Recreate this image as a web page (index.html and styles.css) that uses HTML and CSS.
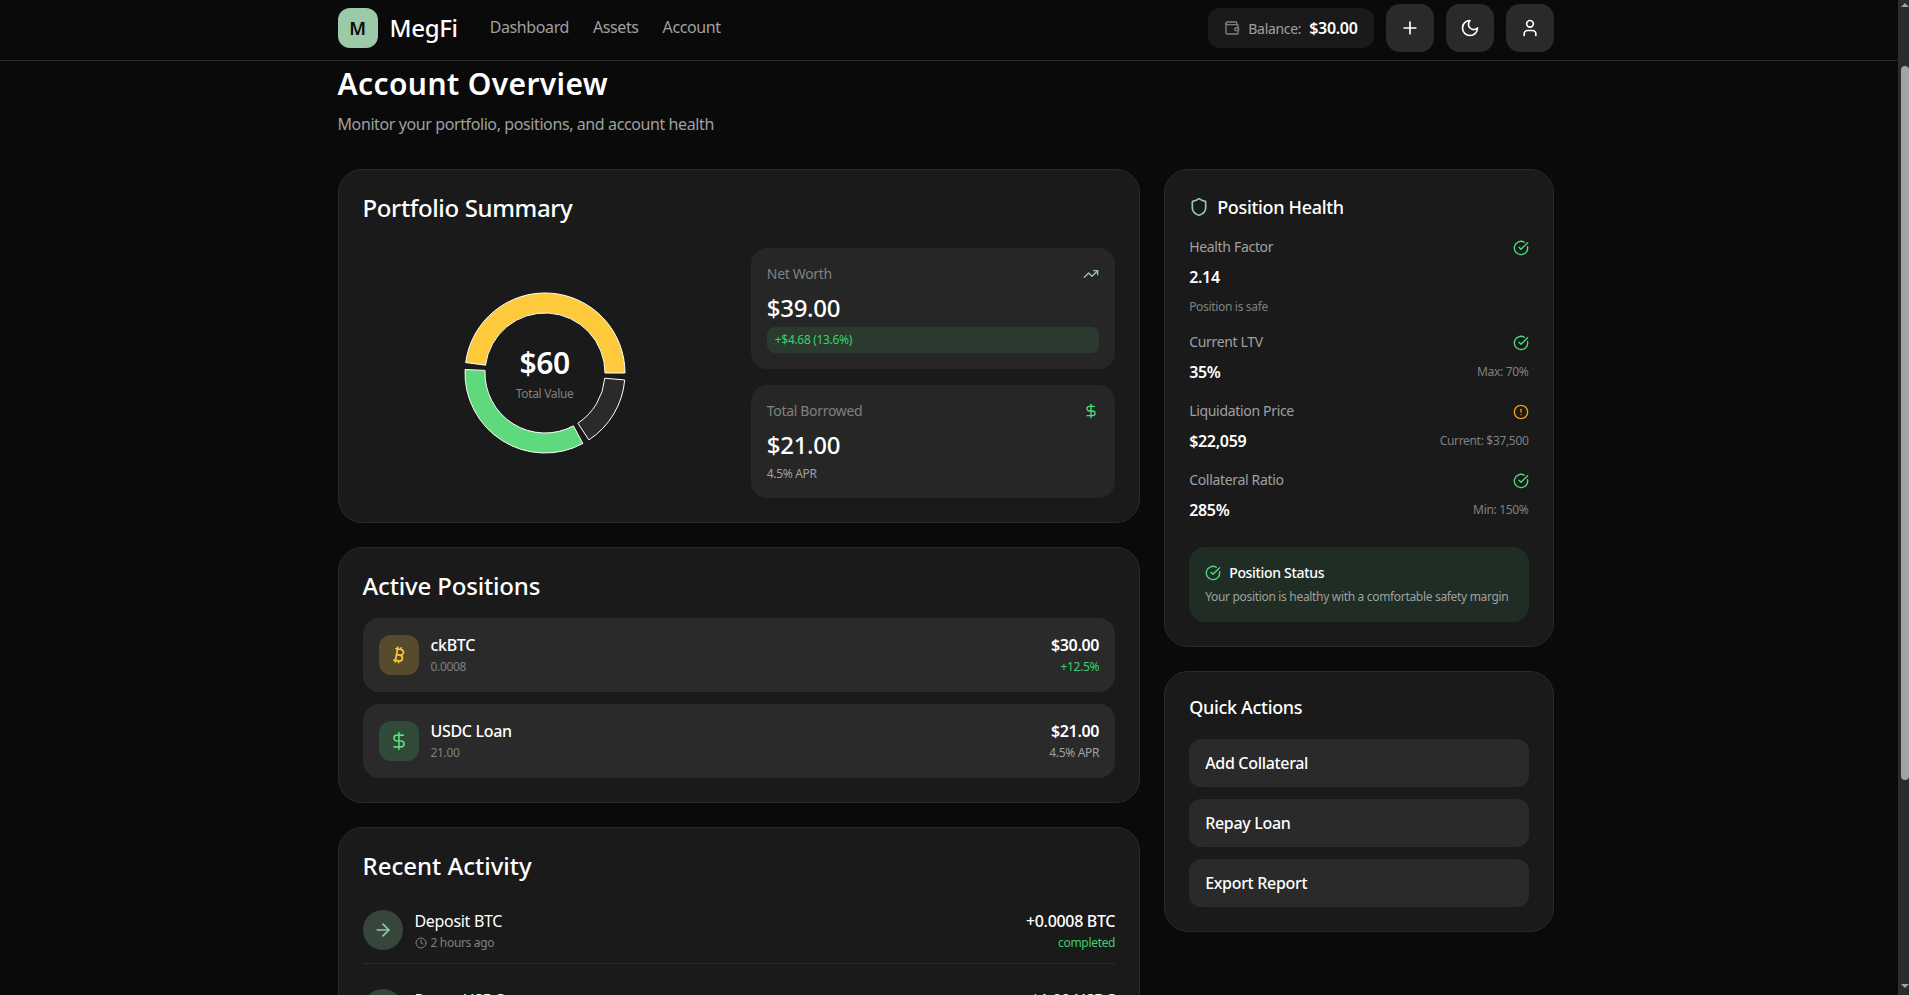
FILE: index.html
```html
<!DOCTYPE html>
<html lang="en">
<head>
    <meta charset="UTF-8">
    <meta name="viewport" content="width=device-width, initial-scale=1.0">
    <title>MegFi - Account Overview</title>
    <link rel="stylesheet" href="styles.css">
</head>
<body>
    <svg class="sprite" aria-hidden="true">
        <symbol id="i-wallet" viewBox="0 0 24 24"><path d="M19 7V4a1 1 0 0 0-1-1H5a2 2 0 0 0 0 4h15a1 1 0 0 1 1 1v4h-3a2 2 0 0 0 0 4h3a1 1 0 0 0 1-1v-2a1 1 0 0 0-1-1"/><path d="M3 5v14a2 2 0 0 0 2 2h15a1 1 0 0 0 1-1v-4"/></symbol>
        <symbol id="i-plus" viewBox="0 0 24 24"><path d="M5 12h14"/><path d="M12 5v14"/></symbol>
        <symbol id="i-moon" viewBox="0 0 24 24"><path d="M12 3a6 6 0 0 0 9 9 9 9 0 1 1-9-9Z"/></symbol>
        <symbol id="i-user" viewBox="0 0 24 24"><path d="M19 21v-2a4 4 0 0 0-4-4H9a4 4 0 0 0-4 4v2"/><circle cx="12" cy="7" r="4"/></symbol>
        <symbol id="i-trend" viewBox="0 0 24 24"><polyline points="22 7 13.5 15.5 8.5 10.5 2 17"/><polyline points="16 7 22 7 22 13"/></symbol>
        <symbol id="i-dollar" viewBox="0 0 24 24"><line x1="12" y1="2" x2="12" y2="22"/><path d="M17 5H9.5a3.5 3.5 0 0 0 0 7h5a3.5 3.5 0 0 1 0 7H6"/></symbol>
        <symbol id="i-shield" viewBox="0 0 24 24"><path d="M20 13c0 5-3.5 7.5-7.66 8.95a1 1 0 0 1-.67-.01C7.5 20.5 4 18 4 13V6a1 1 0 0 1 1-1c2 0 4.5-1.2 6.24-2.72a1.17 1.17 0 0 1 1.52 0C14.51 3.81 17 5 19 5a1 1 0 0 1 1 1z"/></symbol>
        <symbol id="i-check" viewBox="0 0 24 24"><path d="M21.801 10A10 10 0 1 1 17 3.335"/><path d="m9 11 3 3L22 4"/></symbol>
        <symbol id="i-alert" viewBox="0 0 24 24"><circle cx="12" cy="12" r="10"/><line x1="12" y1="8" x2="12" y2="12"/><line x1="12" y1="16" x2="12.01" y2="16"/></symbol>
        <symbol id="i-bitcoin" viewBox="0 0 24 24"><path d="M11.767 19.089c4.924.868 6.14-6.025 1.216-6.894m-1.216 6.894L5.86 18.047m5.908 1.042-.347 1.97m1.563-8.864c4.924.869 6.14-6.025 1.215-6.893m-1.215 6.893-3.94-.694m5.155-6.2L8.29 4.26m5.908 1.042.348-1.97M7.48 20.364l3.126-17.727"/></symbol>
        <symbol id="i-arrow" viewBox="0 0 24 24"><path d="M5 12h14"/><path d="m12 5 7 7-7 7"/></symbol>
        <symbol id="i-clock" viewBox="0 0 24 24"><circle cx="12" cy="12" r="10"/><polyline points="12 6 12 12 16 14"/></symbol>
    </svg>

    <div class="page">
        <header class="topbar">
            <div class="topbar-inner">
                <div class="brand">
                    <div class="logo">M</div>
                    <span class="brand-name">MegFi</span>
                </div>
                <nav class="nav">
                    <a href="#">Dashboard</a>
                    <a href="#">Assets</a>
                    <a href="#">Account</a>
                </nav>
                <div class="topbar-right">
                    <div class="balance">
                        <svg class="icon icon-16 muted"><use href="#i-wallet"/></svg>
                        <span class="balance-label">Balance:</span>
                        <span class="balance-value">$30.00</span>
                    </div>
                    <button class="icon-btn"><svg class="icon icon-20"><use href="#i-plus"/></svg></button>
                    <button class="icon-btn"><svg class="icon icon-20"><use href="#i-moon"/></svg></button>
                    <button class="icon-btn"><svg class="icon icon-20"><use href="#i-user"/></svg></button>
                </div>
            </div>
        </header>

        <main class="content">
            <div class="content-inner">
                <h1>Account Overview</h1>
                <p class="subtitle">Monitor your portfolio, positions, and account health</p>

                <div class="layout">
                    <div class="col col-main">
                        <section class="card">
                            <h2 class="title-summary">Portfolio Summary</h2>
                            <div class="summary">
                                <div class="donut">
                                    <svg class="donut-chart" width="160" height="160" viewBox="0 0 160 160">
                                        <path fill="#ffc93c" d="M160 80A80 80 0 0 0 .68 69.56L20.51 72.17A60 60 0 0 1 140 80Z"/>
                                        <path fill="#5ed97c" d="M.08 76.51A80 80 0 0 0 117.87 150.47L108.4 132.85A60 60 0 0 1 20.06 77.38Z"/>
                                        <path fill="#2a2a2a" d="M123.86 146.9A80 80 0 0 0 159.7 86.97L139.77 85.23A60 60 0 0 1 112.9 130.18Z"/>
                                    </svg>
                                    <div class="donut-label">
                                        <div class="donut-value">$60</div>
                                        <div class="donut-text">Total Value</div>
                                    </div>
                                </div>
                                <div class="stats">
                                    <div class="stat">
                                        <div class="stat-head">
                                            <span>Net Worth</span>
                                            <svg class="icon icon-16 sage"><use href="#i-trend"/></svg>
                                        </div>
                                        <div class="stat-value">$39.00</div>
                                        <div class="stat-badge">+$4.68 (13.6%)</div>
                                    </div>
                                    <div class="stat">
                                        <div class="stat-head">
                                            <span>Total Borrowed</span>
                                            <svg class="icon icon-16 green"><use href="#i-dollar"/></svg>
                                        </div>
                                        <div class="stat-value">$21.00</div>
                                        <div class="stat-note">4.5% APR</div>
                                    </div>
                                </div>
                            </div>
                        </section>

                        <section class="card">
                            <h2 class="title-positions">Active Positions</h2>
                            <div class="positions">
                                <div class="position">
                                    <div class="asset asset-btc"><svg class="icon icon-20"><use href="#i-bitcoin"/></svg></div>
                                    <div class="position-info">
                                        <div class="position-name">ckBTC</div>
                                        <div class="position-sub">0.0008</div>
                                    </div>
                                    <div class="position-right">
                                        <div class="position-amount">$30.00</div>
                                        <div class="position-gain">+12.5%</div>
                                    </div>
                                </div>
                                <div class="position">
                                    <div class="asset asset-usd"><svg class="icon icon-20"><use href="#i-dollar"/></svg></div>
                                    <div class="position-info">
                                        <div class="position-name">USDC Loan</div>
                                        <div class="position-sub">21.00</div>
                                    </div>
                                    <div class="position-right">
                                        <div class="position-amount">$21.00</div>
                                        <div class="position-apr">4.5% APR</div>
                                    </div>
                                </div>
                            </div>
                        </section>

                        <section class="card">
                            <h2 class="title-activity">Recent Activity</h2>
                            <div class="activity">
                                <div class="activity-row">
                                    <div class="activity-icon"><svg class="icon icon-20"><use href="#i-arrow"/></svg></div>
                                    <div class="activity-info">
                                        <div class="activity-name">Deposit BTC</div>
                                        <div class="activity-time"><svg class="icon icon-12"><use href="#i-clock"/></svg>2 hours ago</div>
                                    </div>
                                    <div class="activity-right">
                                        <div class="activity-amount">+0.0008 BTC</div>
                                        <div class="activity-status">completed</div>
                                    </div>
                                </div>
                                <div class="activity-row">
                                    <div class="activity-icon"><svg class="icon icon-20"><use href="#i-arrow"/></svg></div>
                                    <div class="activity-info">
                                        <div class="activity-name">Repay USDC</div>
                                        <div class="activity-time"><svg class="icon icon-12"><use href="#i-clock"/></svg>1 day ago</div>
                                    </div>
                                    <div class="activity-right">
                                        <div class="activity-amount">-$1.00 USDC</div>
                                        <div class="activity-status">completed</div>
                                    </div>
                                </div>
                            </div>
                        </section>
                    </div>

                    <div class="col">
                        <section class="card">
                            <div class="health-title">
                                <svg class="icon icon-20 sage"><use href="#i-shield"/></svg>
                                <h3>Position Health</h3>
                            </div>
                            <div class="metric">
                                <div class="metric-head"><span>Health Factor</span><svg class="icon icon-16 green"><use href="#i-check"/></svg></div>
                                <div class="metric-row"><span class="metric-value">2.14</span></div>
                                <div class="metric-safe">Position is safe</div>
                            </div>
                            <div class="metric">
                                <div class="metric-head"><span>Current LTV</span><svg class="icon icon-16 green"><use href="#i-check"/></svg></div>
                                <div class="metric-row"><span class="metric-value">35%</span><span class="metric-note">Max: 70%</span></div>
                            </div>
                            <div class="metric">
                                <div class="metric-head"><span>Liquidation Price</span><svg class="icon icon-16 orange"><use href="#i-alert"/></svg></div>
                                <div class="metric-row"><span class="metric-value">$22,059</span><span class="metric-note">Current: $37,500</span></div>
                            </div>
                            <div class="metric">
                                <div class="metric-head"><span>Collateral Ratio</span><svg class="icon icon-16 green"><use href="#i-check"/></svg></div>
                                <div class="metric-row"><span class="metric-value">285%</span><span class="metric-note">Min: 150%</span></div>
                            </div>
                            <div class="status">
                                <div class="status-title"><svg class="icon icon-16 green"><use href="#i-check"/></svg>Position Status</div>
                                <p class="status-text">Your position is healthy with a comfortable safety margin</p>
                            </div>
                        </section>

                        <section class="card">
                            <h3 class="actions-title">Quick Actions</h3>
                            <div class="actions">
                                <button class="action">Add Collateral</button>
                                <button class="action">Repay Loan</button>
                                <button class="action">Export Report</button>
                            </div>
                        </section>
                    </div>
                </div>
            </div>
        </main>
    </div>

    <div class="scrollbar">
        <div class="arrow-up"></div>
        <div class="thumb"></div>
        <div class="arrow-down"></div>
    </div>
</body>
</html>
```

FILE: styles.css
```css
* {
    box-sizing: border-box;
}

body {
    font-family: "Noto Sans", "Open Sans", sans-serif;
    letter-spacing: -0.02em;
    margin: 0;
    height: 100vh;
    overflow: hidden;
    display: flex;
    background-color: #0a0a0a;
    color: #fff;
}

.sprite {
    display: none;
}

.icon {
    display: block;
    flex-shrink: 0;
    fill: none;
    stroke: currentColor;
    stroke-width: 2;
    stroke-linecap: round;
    stroke-linejoin: round;
}

.icon-12 { width: 12px; height: 12px; }
.icon-16 { width: 16px; height: 16px; }
.icon-20 { width: 20px; height: 20px; }

.muted { color: #808080; }
.sage { color: #94c9a9; }
.green { color: #4ade80; }
.orange { color: #f59e0b; }

.page {
    flex: 1;
    min-width: 0;
    overflow: hidden;
}

.topbar {
    height: 61px;
    border-bottom: 1px solid #2a2a2a;
    padding: 0 7px 4px 0;
}

.topbar-inner {
    max-width: 1216px;
    margin: 0 auto;
    height: 56px;
    display: flex;
    align-items: center;
}

.brand {
    display: flex;
    align-items: center;
    gap: 12px;
}

.logo {
    width: 40px;
    height: 40px;
    border-radius: 12px;
    background-color: #9ccaa8;
    color: #0a0a0a;
    font-size: 18px;
    font-weight: 600;
    display: flex;
    align-items: center;
    justify-content: center;
}

.brand-name {
    font-size: 24px;
    font-weight: 500;
    margin-bottom: 2px;
}

.nav {
    display: flex;
    gap: 24px;
    margin-left: 32px;
    margin-bottom: 2px;
}

.nav a {
    color: #a0a0a0;
    text-decoration: none;
    font-size: 16px;
    letter-spacing: -0.025em;
}

.topbar-right {
    margin-left: auto;
    display: flex;
    align-items: center;
    gap: 12px;
}

.balance {
    height: 40px;
    display: flex;
    align-items: center;
    padding: 0 16px;
    border-radius: 12px;
    background-color: #1a1a1a;
}

.balance-label {
    color: #a0a0a0;
    font-size: 14px;
    margin-left: 8px;
}

.balance-value {
    font-size: 16px;
    font-weight: 600;
    margin-left: 8px;
}

.icon-btn {
    width: 48px;
    height: 48px;
    border: 0;
    border-radius: 14px;
    background-color: #2a2a2a;
    color: #fff;
    display: flex;
    align-items: center;
    justify-content: center;
    padding: 0;
}

.content {
    padding: 5px 7px 0 0;
}

.content-inner {
    max-width: 1216px;
    margin: 0 auto;
}

h1 {
    margin: 0;
    font-size: 30px;
    line-height: 36px;
    font-weight: 600;
    letter-spacing: 0.013em;
}

.subtitle {
    margin: 10px 0 33px;
    color: #a0a0a0;
    font-size: 16px;
    line-height: 24px;
    letter-spacing: -0.025em;
}

.layout {
    display: grid;
    grid-template-columns: repeat(3, minmax(0, 1fr));
    gap: 24px;
    align-items: start;
}

.col {
    display: flex;
    flex-direction: column;
    gap: 24px;
    min-width: 0;
}

.col-main {
    grid-column: span 2;
}

.card {
    background-color: #1a1a1a;
    border: 1px solid #2a2a2a;
    border-radius: 24px;
    padding: 24px;
}

h2 {
    margin: 0;
    font-size: 24px;
    line-height: 28px;
    font-weight: 500;
    letter-spacing: -0.015em;
}

.title-summary {
    margin-bottom: 26px;
}

.title-positions {
    margin-bottom: 18px;
    letter-spacing: -0.007em;
}

.title-activity {
    margin-bottom: 29px;
    letter-spacing: 0;
}

.summary {
    display: grid;
    grid-template-columns: 1fr 1fr;
    gap: 24px;
}

.donut {
    position: relative;
    display: flex;
    align-items: center;
    justify-content: center;
}

.donut-chart {
    overflow: visible;
}

.donut-chart path {
    stroke: #fff;
    stroke-width: 1;
}

.donut-label {
    position: absolute;
    top: 50%;
    left: 50%;
    transform: translate(-50%, -50%);
    text-align: center;
}

.donut-value {
    font-size: 30px;
    line-height: 36px;
    font-weight: 600;
    margin-bottom: 5px;
}

.donut-text {
    color: #808080;
    font-size: 12px;
    line-height: 16px;
}

.stats {
    display: flex;
    flex-direction: column;
    gap: 16px;
}

.stat {
    background-color: #262626;
    border-radius: 16px;
    padding: 16px;
}

.stat-head {
    display: flex;
    justify-content: space-between;
    align-items: center;
    color: #808080;
    font-size: 14px;
    line-height: 20px;
}

.stat-value {
    font-size: 24px;
    line-height: 32px;
    font-weight: 500;
    margin-top: 8px;
}

.stat-badge {
    margin-top: 3px;
    height: 26px;
    padding: 0 8px;
    border-radius: 8px;
    background-color: #2a3a2e;
    color: #3ecf6e;
    font-size: 12px;
    line-height: 26px;
}

.stat-note {
    margin-top: 5px;
    color: #a0a0a0;
    font-size: 12px;
    line-height: 16px;
}

.positions {
    display: flex;
    flex-direction: column;
    gap: 12px;
}

.position {
    display: flex;
    align-items: center;
    gap: 12px;
    height: 74px;
    padding: 0 16px;
    border-radius: 16px;
    background-color: #2a2a2a;
}

.asset {
    width: 40px;
    height: 40px;
    border-radius: 12px;
    display: flex;
    align-items: center;
    justify-content: center;
}

.asset-btc {
    background-color: #574b2e;
    color: #ffc93c;
}

.asset-usd {
    background-color: #2f4a39;
    color: #5ed97c;
}

.position-info {
    flex: 1;
    margin-top: -2px;
}

.position-name {
    font-size: 16px;
    line-height: 24px;
    font-weight: 500;
}

.position-sub {
    color: #808080;
    font-size: 12px;
    line-height: 16px;
    margin-top: 2px;
}

.position-right {
    text-align: right;
    margin-top: -2px;
}

.position-amount {
    font-size: 16px;
    line-height: 24px;
    font-weight: 600;
}

.position-gain {
    color: #3ecf6e;
    font-size: 12px;
    line-height: 16px;
    margin-top: 2px;
}

.position-apr {
    color: #a0a0a0;
    font-size: 12px;
    line-height: 16px;
    margin-top: 2px;
}

.activity-row {
    display: flex;
    align-items: center;
    gap: 12px;
    padding-bottom: 12px;
    margin-bottom: 24px;
    border-bottom: 1px solid #2a2a2a;
}

.activity-icon {
    width: 40px;
    height: 40px;
    border-radius: 50%;
    background-color: #36463b;
    color: #94c9a9;
    display: flex;
    align-items: center;
    justify-content: center;
}

.activity-info {
    flex: 1;
}

.activity-name {
    font-size: 16px;
    line-height: 24px;
}

.activity-time {
    display: flex;
    align-items: center;
    gap: 4px;
    color: #808080;
    font-size: 12px;
    line-height: 16px;
    margin-top: 2px;
}

.activity-right {
    text-align: right;
}

.activity-amount {
    font-size: 16px;
    line-height: 24px;
    font-weight: 500;
}

.activity-status {
    color: #3ecf6e;
    font-size: 12px;
    line-height: 16px;
    margin-top: 2px;
}

.health-title {
    display: flex;
    align-items: center;
    gap: 8px;
    margin-top: -1px;
    margin-bottom: 16px;
}

h3 {
    margin: 0;
    font-size: 18px;
    line-height: 28px;
    font-weight: 500;
}

.metric {
    margin-bottom: 17px;
}

.metric-head {
    display: flex;
    justify-content: space-between;
    align-items: center;
    color: #a0a0a0;
    font-size: 14px;
    line-height: 20px;
}

.metric-head .icon {
    margin-top: 2px;
}

.metric-row {
    display: flex;
    justify-content: space-between;
    align-items: center;
    margin-top: 8px;
    line-height: 24px;
}

.metric-value {
    font-size: 16px;
    font-weight: 600;
}

.metric-note {
    color: #808080;
    font-size: 12px;
}

.metric-safe {
    color: #808080;
    font-size: 12px;
    line-height: 16px;
    margin-top: 10px;
}

.status {
    margin-top: 25px;
    padding: 16px;
    height: 75px;
    border-radius: 16px;
    background-color: #1f2d24;
}

.status-title {
    display: flex;
    align-items: center;
    gap: 8px;
    font-size: 14px;
    line-height: 20px;
    font-weight: 500;
}

.status-text {
    margin: 6px 0 0;
    color: #a0a0a0;
    font-size: 12px;
    line-height: 16px;
}

.actions-title {
    margin-top: -3px;
    margin-bottom: 18px;
}

.actions {
    display: flex;
    flex-direction: column;
    gap: 12px;
}

.action {
    height: 48px;
    border: 0;
    border-radius: 12px;
    background-color: #2a2a2a;
    color: #fff;
    font-family: inherit;
    letter-spacing: inherit;
    font-size: 16px;
    font-weight: 500;
    text-align: left;
    padding: 0 16px;
}

.scrollbar {
    width: 11px;
    flex-shrink: 0;
    background-color: #2c2c2c;
    padding: 3px 0 7px 3px;
    display: flex;
    flex-direction: column;
}

.arrow-up {
    width: 0;
    height: 0;
    border: 4px solid transparent;
    border-top: 0;
    border-bottom: 4px solid #a3a3a3;
}

.thumb {
    height: 714px;
    margin-top: 59px;
    background-color: #a3a3a3;
    border-radius: 4px;
}

.arrow-down {
    width: 0;
    height: 0;
    margin-top: auto;
    border: 4px solid transparent;
    border-bottom: 0;
    border-top: 4px solid #a3a3a3;
}
```
